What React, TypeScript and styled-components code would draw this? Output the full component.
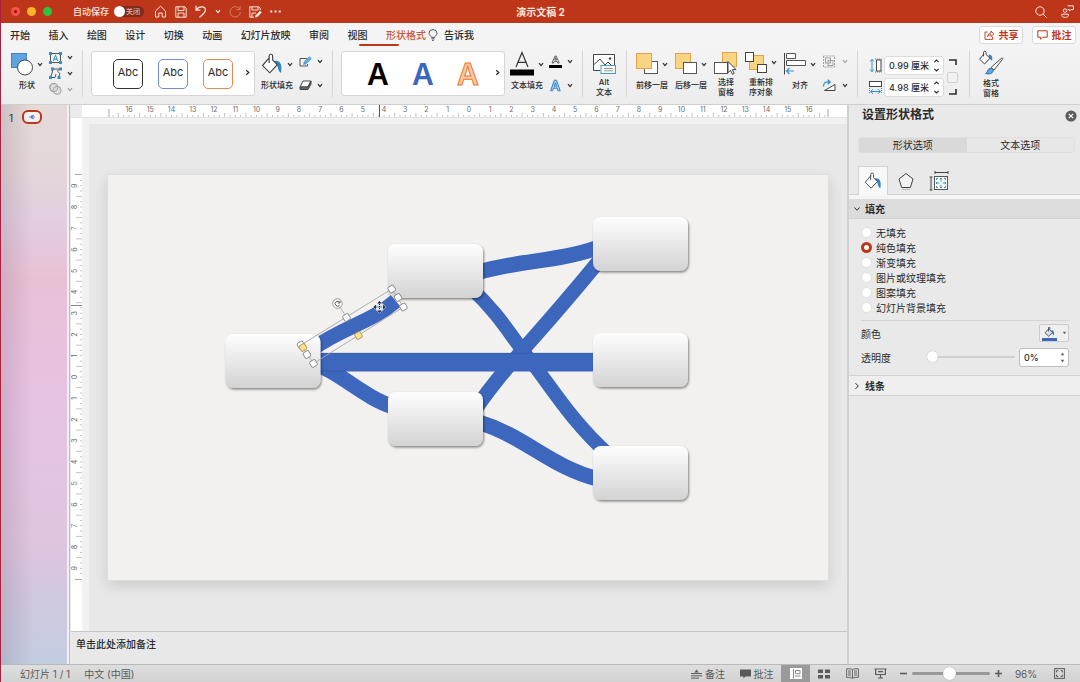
import React, { useState } from "react";
import styled, { createGlobalStyle, css } from "styled-components";

const RED = "#bd3619";
const INK = "#2b2b2b";
const BLUE = "#3c67bd";
const FONT = `Inter, "Noto Sans CJK SC", sans-serif`;

const GlobalStyle = createGlobalStyle`
  *, *::before, *::after { box-sizing: border-box; }
  body { margin: 0; font-family: ${FONT}; font-size: 10px; color: ${INK}; background: #e8e8e8; }
  button, input { font: inherit; color: inherit; margin: 0; padding: 0; border: 0; background: none; }
  svg { display: block; flex: none; }
`;

/* ---------- shell ---------- */

const Window = styled.div`
  min-height: 100vh;
  display: flex;
  flex-direction: column;
  border-left: 1px solid #a8203c;
  overflow: hidden;
`;

const TitleBar = styled.header`
  display: grid;
  grid-template-columns: 1fr auto 1fr;
  align-items: center;
  height: 23px;
  background: ${RED};
  color: #fbe6df;
`;

const TitleGroup = styled.div<{ $end?: boolean }>`
  display: flex;
  align-items: center;
  gap: ${(p) => (p.$end ? 14 : 8)}px;
  padding: 0 6px 0 10px;
  justify-content: ${(p) => (p.$end ? "flex-end" : "flex-start")};
`;

const Lights = styled.div`
  display: flex;
  gap: 7px;
  margin-right: 13px;
`;

const Light = styled.button<{ $color: string; $dot?: boolean }>`
  width: 9px;
  height: 9px;
  border-radius: 50%;
  background: ${(p) => p.$color};
  display: grid;
  place-items: center;
  &::after {
    content: "";
    width: 3px;
    height: 3px;
    border-radius: 50%;
    background: ${(p) => (p.$dot ? "#7a0d05" : "transparent")};
  }
`;

const AutoSave = styled.label`
  display: flex;
  align-items: center;
  gap: 5px;
  margin-right: 2px;
  font-size: 9px;
  font-weight: 500;
  white-space: nowrap;
`;

const Switch = styled.span`
  position: relative;
  width: 30px;
  height: 11px;
  border-radius: 6px;
  background: #7d2b1b;
  display: flex;
  align-items: center;
  justify-content: flex-end;
  padding-right: 4px;
  color: #e3b9ae;
  font-size: 7px;
  line-height: 11px;
  input {
    appearance: none;
    position: absolute;
    left: 0;
    top: 0;
    width: 11px;
    height: 11px;
    border-radius: 50%;
    background: #fff;
  }
`;

const DocTitle = styled.h1`
  margin: 0;
  font-size: 10px;
  font-weight: 700;
`;

const IconButton = styled.button<{ $dim?: boolean }>`
  display: flex;
  align-items: center;
  justify-content: center;
  opacity: ${(p) => (p.$dim ? 0.4 : 1)};
`;

/* ---------- ribbon ---------- */

const TabRow = styled.nav`
  display: flex;
  align-items: center;
  height: 25px;
  padding: 0 4px 2px 9px;
  background: #f4f4f4;
`;

const Tabs = styled.div`
  display: flex;
  justify-content: space-between;
  width: 416px;
`;

const Tab = styled.button<{ $active?: boolean }>`
  position: relative;
  font-weight: 500;
  line-height: 16px;
  white-space: nowrap;
  color: ${(p) => (p.$active ? "#c8553f" : INK)};
  ${(p) =>
    p.$active &&
    css`
      &::after {
        content: "";
        position: absolute;
        right: 27px;
        bottom: -3px;
        width: 40px;
        height: 2px;
        border-radius: 1px;
        background: ${RED};
      }
    `}
`;

const TellMe = styled.button`
  display: flex;
  align-items: center;
  gap: 6px;
  margin-left: 2px;
  font-weight: 500;
`;

const TabActions = styled.div`
  display: flex;
  gap: 9px;
  margin-left: auto;
`;

const ActionButton = styled.button`
  display: flex;
  align-items: center;
  justify-content: center;
  gap: 4px;
  width: 44px;
  height: 18px;
  border: 1px solid #dadada;
  border-radius: 3px;
  background: #fff;
  color: ${RED};
  font-weight: 600;
`;

const Ribbon = styled.section`
  display: flex;
  height: 57px;
  padding: 2px 2px 7px;
  background: linear-gradient(#f4f4f4, #ececec);
  border-bottom: 1px solid #cfcfcf;
`;

const Group = styled.div<{ $gap?: number; $wide?: boolean; $last?: boolean }>`
  display: flex;
  flex: none;
  gap: ${(p) => p.$gap ?? 6}px;
  padding: ${(p) => (p.$wide ? "0 11px" : "0 9px 0 8px")};
  border-right: ${(p) => (p.$last ? "0" : "1px solid #d5d5d5")};
`;

const BigButtonBox = styled.button<{ $width: number }>`
  display: flex;
  flex-direction: column;
  align-items: center;
  width: ${(p) => p.$width}px;
  font-size: 8px;
  font-weight: 500;
  line-height: 10px;
  white-space: pre;
`;

const BigIcon = styled.span`
  display: flex;
  align-items: center;
  justify-content: center;
  gap: 4px;
  width: 100%;
  height: 28px;
  margin-bottom: 2px;
`;

const SmallColumn = styled.div<{ $width?: number }>`
  display: flex;
  flex-direction: column;
  justify-content: space-around;
  width: ${(p) => p.$width ?? 24}px;
`;

const SmallButton = styled.button<{ $dim?: boolean }>`
  display: flex;
  align-items: center;
  justify-content: space-between;
  height: 15px;
  opacity: ${(p) => (p.$dim ? 0.4 : 1)};
`;

const Gallery = styled.div`
  display: flex;
  align-items: center;
  justify-content: center;
  position: relative;
  gap: 15px;
  width: 164px;
  height: 45px;
  margin-top: 1px;
  background: #fff;
  border: 1px solid #d6d6d6;
  border-radius: 3px;
`;

const GalleryMore = styled.button`
  position: absolute;
  right: 4px;
  top: 17px;
`;

const StyleSwatch = styled.button<{ $color: string }>`
  width: 30px;
  height: 30px;
  border: 1px solid ${(p) => p.$color};
  border-radius: 5px;
  font-size: 11px;
  line-height: 24px;
  padding-bottom: 4px;
`;

const TextSwatch = styled.button<{ $color: string; $outline?: string }>`
  width: 30px;
  font-size: 30px;
  line-height: 44px;
  font-weight: 600;
  color: ${(p) => p.$color};
  -webkit-text-stroke: ${(p) => (p.$outline ? `1px ${p.$outline}` : "0")};
`;

const SizeFields = styled.div`
  display: flex;
  flex-direction: column;
  gap: 3px;
  padding-top: 6px;
`;

const SizeField = styled.label`
  display: flex;
  align-items: center;
  gap: 2px;
`;

const NumberBox = styled.span<{ $width: number; $boxed?: boolean }>`
  display: flex;
  align-items: center;
  width: ${(p) => p.$width}px;
  height: 19px;
  margin-left: ${(p) => (p.$boxed ? 4 : 0)}px;
  padding: 0 3px 0 4px;
  background: #fff;
  border: 1px solid ${(p) => (p.$boxed ? "#bdbdbd" : "#dcdcdc")};
  border-radius: 3px;
  input {
    flex: 1;
    min-width: 0;
    font-size: 9px;
    font-weight: 500;
    outline: none;
  }
`;

const LockRatio = styled.div`
  display: flex;
  flex-direction: column;
  align-items: center;
  justify-content: space-between;
  height: 36px;
  margin: 9px 0 0 -2px;
  input {
    appearance: none;
    width: 11px;
    height: 11px;
    border: 1px solid #cfcfcf;
    border-radius: 2px;
    background: #f1f1f1;
  }
`;

/* ---------- workspace ---------- */

const Workspace = styled.div`
  display: flex;
  flex: 1;
  min-height: 0;
`;

const Thumbnails = styled.aside`
  display: flex;
  align-items: flex-start;
  gap: 9px;
  width: 69px;
  flex: none;
  padding: 5px 0 0 8px;
  border-right: 1px solid #bdbdbd;
  box-shadow: inset -2px 0 #f3f0f3;
  background: linear-gradient(90deg, rgba(90, 60, 80, 0.16), rgba(90, 60, 80, 0) 32px),
    linear-gradient(
      #e5dbd9 0%,
      #e3d6da 12%,
      #e2cfe0 20%,
      #e9c1d5 31%,
      #e8c1dd 42%,
      #e5c4e2 55%,
      #dfc5de 78%,
      #d0c8de 88%,
      #c3cde2 100%
    );
  line-height: 16px;
`;

const Thumb = styled.button`
  display: grid;
  place-items: center;
  width: 20px;
  height: 14px;
  border: 2px solid ${RED};
  border-radius: 6px;
  background: #f2f1ef;
`;

const Editor = styled.main`
  display: flex;
  flex-direction: column;
  flex: 1;
  min-width: 0;
  padding-left: 1px;
  background: #e8e8e8;
`;

const RulerRow = styled.div`
  display: flex;
  height: 13px;
  background: #fff;
  border-bottom: 1px solid #e2e2e2;
  overflow: hidden;
`;

const RulerCorner = styled.div`
  width: 11px;
  flex: none;
  background: #ebebeb;
`;

const RulerTrack = styled.div`
  flex: 1;
  min-width: 0;
  display: flex;
  justify-content: center;
`;

const StageRow = styled.div`
  display: flex;
  flex: 1;
`;

const VRulerTrack = styled.div`
  width: 11px;
  flex: none;
  background: #fff;
  overflow: hidden;
`;

const Stage = styled.div`
  flex: 1;
  min-width: 0;
  padding: 51px 19px;
  border: solid #f1f1f1;
  border-width: 6px 0 0 7px;
`;

const Slide = styled.div`
  aspect-ratio: 16 / 9;
  background: #f2f1ef;
  box-shadow: 0 0 0 1px #dededd, 0 5px 14px rgba(0, 0, 0, 0.14);
  svg {
    width: 100%;
    height: 100%;
  }
`;

const Notes = styled.div`
  height: 33px;
  padding: 3px 5px;
  border-top: 1px solid #c6c6c6;
  font-weight: 500;
  line-height: 18px;
`;

/* ---------- format pane ---------- */

const Pane = styled.aside`
  width: 233px;
  flex: none;
  display: flex;
  flex-direction: column;
  border-left: 2px solid #d0d0d0;
  background: #e9e9e9;
`;

const PaneHeader = styled.div`
  display: flex;
  align-items: center;
  justify-content: space-between;
  height: 22px;
  padding: 0 3px 0 13px;
  h2 {
    margin: 0;
    font-size: 12px;
    line-height: 18px;
    padding-bottom: 2px;
    font-weight: 600;
  }
`;

const Segments = styled.div`
  display: flex;
  height: 16px;
  margin: 10px 5px 0 9px;
  border: 1px solid #e0e0e0;
  border-radius: 3px;
  overflow: hidden;
`;

const Segment = styled.button<{ $active?: boolean }>`
  flex: 1;
  line-height: 14px;
  background: ${(p) => (p.$active ? "#d9d9d9" : "#e7e7e7")};
`;

const KindTabs = styled.div`
  display: flex;
  gap: 3px;
  height: 29px;
  margin-top: 13px;
  padding-left: 9px;
  border-bottom: 1px solid #d2d2d2;
`;

const KindTab = styled.button<{ $active?: boolean }>`
  display: grid;
  place-items: center;
  width: 30px;
  height: 29px;
  border: 1px solid transparent;
  border-bottom: 0;
  ${(p) => p.$active && "background: #f8f8f8; border-color: #d2d2d2;"}
`;

const Section = styled.section<{ $open?: boolean }>`
  border-top: ${(p) => (p.$open ? "4px solid #f5f5f5" : "1px solid #d2d2d2")};
`;

const SectionHeader = styled.button<{ $open?: boolean }>`
  display: flex;
  align-items: center;
  gap: 4px;
  width: 100%;
  height: 20px;
  padding-left: 4px;
  border-bottom: 1px solid #d2d2d2;
  background: ${(p) => (p.$open ? "#dcdcdc" : "#efefef")};
  font-weight: 600;
`;

const RadioList = styled.fieldset`
  margin: 0 11px 0 12px;
  padding: 6px 0 5px;
  border: 0;
  border-bottom: 1px solid #d4d4d4;
`;

const RadioRow = styled.label`
  display: flex;
  align-items: center;
  gap: 4px;
  height: 15px;
  input {
    appearance: none;
    width: 11px;
    height: 11px;
    border-radius: 50%;
    background: #fff;
    box-shadow: inset 0 0 0 1px #dedede;
  }
  input:checked {
    background: radial-gradient(circle, #fff 0 2px, ${RED} 3px);
    box-shadow: none;
  }
`;

const FieldRow = styled.div<{ $last?: boolean }>`
  display: flex;
  align-items: center;
  height: ${(p) => (p.$last ? 30 : 24)}px;
  padding: ${(p) => (p.$last ? "0 11px 6px 12px" : "0 11px 0 12px")};
  label,
  span:first-child {
    margin-right: auto;
  }
`;

const ColorButton = styled.button`
  display: flex;
  align-items: center;
  justify-content: center;
  gap: 5px;
  width: 30px;
  height: 18px;
  border: 1px solid #cacaca;
  border-radius: 2px;
  background: #efefef;
`;

const Range = styled.input<{ $width: number; $dark?: boolean }>`
  appearance: none;
  width: ${(p) => p.$width}px;
  height: 12px;
  &::-webkit-slider-runnable-track {
    height: ${(p) => (p.$dark ? 3 : 2)}px;
    border-radius: 2px;
    background: ${(p) => (p.$dark ? "#989898" : "#d0d0d0")};
  }
  &::-webkit-slider-thumb {
    appearance: none;
    width: ${(p) => (p.$dark ? 13 : 11)}px;
    height: ${(p) => (p.$dark ? 13 : 11)}px;
    margin-top: -5px;
    border-radius: 50%;
    background: #fff;
    box-shadow: 0 0 1px rgba(0, 0, 0, 0.35);
  }
`;

/* ---------- status bar ---------- */

const StatusBar = styled.footer`
  display: flex;
  align-items: center;
  height: 18px;
  padding: 0 8px 0 19px;
  border-top: 1px solid #b9b9b9;
  background: linear-gradient(#dedede, #d2d2d2);
  color: #5a5a5a;
  white-space: nowrap;
`;

const StatusText = styled.span`
  margin-right: 14px;
`;

const StatusRight = styled.div`
  display: flex;
  align-items: center;
  height: 100%;
  margin-left: auto;
`;

const StatusButton = styled.button<{ $width: number; $active?: boolean }>`
  display: flex;
  align-items: center;
  justify-content: center;
  gap: 3px;
  width: ${(p) => p.$width}px;
  height: 100%;
  background: ${(p) => (p.$active ? "#9a9a9a" : "none")};
`;

/* ---------- icons ---------- */

type IconProps = { w: number; h: number; box?: string; sw?: number; children: React.ReactNode };

const Icon = ({ w, h, box, sw = 1, children }: IconProps) => (
  <svg width={w} height={h} viewBox={box ?? `0 0 ${w} ${h}`} fill="none" stroke="currentColor" strokeWidth={sw} aria-hidden="true">
    {children}
  </svg>
);

const Chevron = () => (
  <Icon w={6} h={5} sw={1.2}>
    <path d="M1 1.2 3 3.6 5 1.2" />
  </Icon>
);

const ChevronRight = () => (
  <Icon w={5} h={7} sw={1.2}>
    <path d="M1.2 1.2 3.8 3.5 1.2 5.8" />
  </Icon>
);

const Stepper = () => (
  <Icon w={7} h={15} sw={1.2}>
    <path d="M1.3 4.2 3.5 2 5.7 4.2M1.3 10.8 3.5 13 5.7 10.8" />
  </Icon>
);

const Bucket = ({ size = 20 }: { size?: number }) => (
  <Icon w={size} h={size} box="0 0 20 20">
    <path d="M12.6 7C18 6.6 19.4 11 18.2 18 15.4 17 15.6 12.4 14.2 10.2L11 7.4Z" fill="#2f83c5" stroke="none" />
    <path d="M7.6 4.2 1.4 11.4 8 18 14.8 10.6 10.6 6.4V2.8a1.6 1.6 0 0 0-3.2 0v6.4" fill="#fff" stroke="#3c3c3c" />
  </Icon>
);

const ShapesIcon = () => (
  <Icon w={22} h={24}>
    <rect x="0.5" y="1.5" width="15" height="14" fill="#5ea3df" stroke="#3c86c8" />
    <circle cx="14" cy="15.5" r="7.5" fill="#fff" stroke="#444" />
  </Icon>
);

const TextBoxIcon = () => (
  <Icon w={13} h={12}>
    <rect x="1.5" y="1.5" width="10" height="9" stroke="#555" />
    <path d="M0 0h3v3H0zM10 0h3v3h-3zM0 9h3v3H0zM10 9h3v3h-3z" fill="#2f8fd0" stroke="none" />
    <path d="M4.3 9 6.5 3.2 8.7 9M5 7.2h3" stroke="#2f8fd0" />
  </Icon>
);

const EditPointsIcon = () => (
  <Icon w={13} h={12}>
    <path d="M3.5 2h8C7 3.5 8.5 5 11 6.5L9.5 10M3.5 2C4 5 2.5 7 1.5 10.5h4.5L7 7" stroke="#555" />
    <path d="M2 0.5h3v3H2zM10 0.5h3v3h-3zM0 9h3v3H0zM8.5 9h3v3h-3z" fill="#2f8fd0" stroke="none" />
  </Icon>
);

const MergeIcon = () => (
  <Icon w={13} h={12}>
    <circle cx="4.8" cy="4.6" r="4" fill="#ccc" />
    <circle cx="8.2" cy="7.4" r="4" fill="#ccc" />
    <circle cx="4.8" cy="4.6" r="4" />
  </Icon>
);

const OutlineIcon = () => (
  <Icon w={13} h={12}>
    <path d="M8 2.5H1v7.5h7.5V8" stroke="#555" />
    <path d="M4.6 8.4 5.4 5.8 10.4 0.9 12.2 2.6 7.2 7.6Z" fill="#5fb2e6" stroke="#2f83c5" strokeWidth="0.8" />
  </Icon>
);

const EffectsIcon = () => (
  <Icon w={13} h={12}>
    <path d="M4 2h8L9 8H1Z" fill="#fff" stroke="#444" />
    <path d="M1 8v2.5h8L12 5V2L9 8Z" fill="#666" stroke="#444" />
  </Icon>
);

const TextFillIcon = () => (
  <Icon w={24} h={26}>
    <path d="M6 16 12 1.5 18 16M8 11.3h8" stroke="#333" strokeWidth="1.2" />
    <rect x="0" y="18.5" width="24" height="6" fill="#000" stroke="none" />
  </Icon>
);

const TextOutlineIcon = () => (
  <Icon w={13} h={13}>
    <path d="M3 8 6 1h1.2l3 7H8.6L8 6.4H5.2L4.6 8ZM5.7 5h1.9L6.6 2.6Z" stroke="#444" strokeWidth="0.8" />
    <rect x="0" y="10" width="13" height="3" fill="#000" stroke="none" />
  </Icon>
);

const TextEffectIcon = () => (
  <Icon w={13} h={13}>
    <path d="M1.6 11.8 5.3 1.2h2.2l3.7 10.6H9L8.2 9.2H4.5L3.7 11.8ZM5.2 7.2h2.3L6.4 3.8Z" fill="#a9d3f2" stroke="#2f83c5" />
  </Icon>
);

const AltTextIcon = () => (
  <Icon w={24} h={24}>
    <path d="M8 19.5H1.5v-16h21v11" fill="#fff" stroke="#444" />
    <path d="M1.5 14 8 8l5 6 3-3 4 4" stroke="#444" />
    <circle cx="18" cy="7.5" r="1.2" fill="#444" stroke="none" />
    <rect x="9" y="14.5" width="14.5" height="8" fill="#fff" stroke="#3c9bd0" />
    <path d="M12 17.5h9M12 19.8h9" stroke="#777" strokeWidth="0.8" />
  </Icon>
);

const ForwardIcon = () => (
  <Icon w={22} h={24}>
    <rect x="8.5" y="9.5" width="13" height="12" fill="#fff" stroke="#555" />
    <rect x="0.5" y="1.5" width="15" height="15" fill="#f8d583" stroke="#e5a150" />
  </Icon>
);

const BackwardIcon = () => (
  <Icon w={22} h={24}>
    <rect x="0.5" y="1.5" width="15" height="15" fill="#f8d583" stroke="#e5a150" />
    <rect x="8.5" y="10.5" width="13" height="11" fill="#fff" stroke="#555" />
  </Icon>
);

const SelectionPaneIcon = () => (
  <Icon w={24} h={24}>
    <rect x="8.5" y="1.5" width="14" height="14" fill="#f8d583" stroke="#e5a150" />
    <rect x="0.5" y="11.5" width="13" height="11" fill="#fff" stroke="#555" />
    <path d="M14 10.5v11.2l2.6-2.4 1.8 4 1.8-.9-1.8-3.8h3.6Z" fill="#fff" stroke="#333" strokeWidth="0.9" />
  </Icon>
);

const ReorderIcon = () => (
  <Icon w={22} h={24}>
    <rect x="4.5" y="4.5" width="14" height="14" fill="#f8d583" stroke="#e5a150" />
    <rect x="0.5" y="1.5" width="8" height="9" fill="#fff" stroke="#444" />
    <rect x="12.5" y="13.5" width="9" height="8" fill="#fff" stroke="#444" />
  </Icon>
);

const AlignIcon = () => (
  <Icon w={22} h={24}>
    <path d="M0.5 1v21.5" stroke="#444" />
    <path d="M2.5 1.5h9v5h-9zM2.5 8.5h19v5h-19z" fill="#fff" stroke="#555" />
    <path d="M10 19H2.5M5.5 16 2.5 19l3 3" stroke="#2f8fd0" strokeWidth="1.2" />
  </Icon>
);

const GroupIcon = () => (
  <Icon w={14} h={13}>
    <rect x="3.5" y="3" width="5" height="5" />
    <rect x="6" y="5.5" width="5" height="5" />
    <rect x="1.5" y="1" width="11" height="11" strokeDasharray="2 1" />
  </Icon>
);

const RotateIcon = () => (
  <Icon w={14} h={13}>
    <path d="M1.5 7.5C1.5 3.5 4 2.5 8 3M5.8 0.8 8.2 3 5.8 5.2" stroke="#2f8fd0" strokeWidth="1.2" />
    <path d="M2.5 11.5H13V5.5Z" fill="#fff" stroke="#444" />
  </Icon>
);

const HeightIcon = () => (
  <Icon w={13} h={15}>
    <path d="M3 1.5v12M1 3.5l2-2.2 2 2.2M1 11.5l2 2.2 2-2.2" stroke="#2f8fd0" />
    <path d="M6 1h7M6 14h7" stroke="#777" strokeDasharray="1 1" />
    <rect x="7.5" y="2" width="4.5" height="11" fill="#fff" stroke="#444" />
  </Icon>
);

const WidthIcon = () => (
  <Icon w={13} h={15}>
    <rect x="0.5" y="1.5" width="12" height="5" fill="#fff" stroke="#444" />
    <path d="M.5 8v6M12.5 8v6" stroke="#777" strokeDasharray="1 1" />
    <path d="M1.5 11.5h10M4 9.2 1.7 11.5 4 13.8M9 9.2l2.3 2.3L9 13.8" stroke="#2f8fd0" />
  </Icon>
);

const FormatPaneIcon = () => (
  <Icon w={26} h={26}>
    <path d="M10.6 4.4C14 4.6 14.8 7 14 11L11.4 8Z" fill="#2f83c5" stroke="none" />
    <path d="M6 4 1.6 9.2 6.6 14 12 8.2 8 4.4V2.4a1.2 1.2 0 0 0-2.4 0v4" fill="#fff" stroke="#3c3c3c" />
    <path d="M13 17.5 23.6 8.2c1-.6 1.6.2 1 1L16 20Z" fill="#fff" stroke="#444" />
    <path d="M7.5 23.5c2.4-.2 1.4-4.6 4.6-5.2 2 0 3.4 1.4 3 3-.6 2.2-4.2 3.4-7.6 2.2Z" fill="#5aa9e0" stroke="#2f6fb0" />
  </Icon>
);

const HomeIcon = () => (
  <Icon w={13} h={13}>
    <path d="M1.5 6 6.5 1.2 11.5 6v6H8.2V8H4.8v4H1.5Z" />
  </Icon>
);

const SaveIcon = () => (
  <Icon w={12} h={12}>
    <path d="M.8.8h9l1.4 1.4v9H.8ZM3 .8v3.7h6V.8M3 11.2V7h6v4.2" />
  </Icon>
);

const SaveEditIcon = () => (
  <Icon w={13} h={12}>
    <path d="M5 11.2H.8V.8h9l1.4 1.4v2M3 .8v3.2h6V.8M3 11.2V7h4" />
    <path d="M6 11.6 6.6 9.2 11 4.8l1.8 1.8-4.4 4.4Z" fill="currentColor" stroke="none" />
  </Icon>
);

const UndoIcon = () => (
  <Icon w={12} h={13} sw={1.2}>
    <path d="M1 .8v4.4h4.4M1.2 5C4 .6 10.6 1.2 10.4 5.2 10.2 8 8 9 4.4 12.4" />
  </Icon>
);

const RedoIcon = () => (
  <Icon w={12} h={13}>
    <path d="M11 1v3.6H7.4M10.8 4.4A5.2 5.2 0 1 0 11.4 7" />
  </Icon>
);

const DotsIcon = () => (
  <Icon w={11} h={3}>
    <path d="M.3.5h2v2h-2zM4.5.5h2v2h-2zM8.7.5h2v2h-2z" fill="currentColor" stroke="none" />
  </Icon>
);

const SearchIcon = () => (
  <Icon w={12} h={12}>
    <circle cx="5" cy="5" r="4.2" />
    <path d="M8 8l3.6 3.6" />
  </Icon>
);

const PeopleIcon = () => (
  <Icon w={13} h={13}>
    <circle cx="4" cy="5.6" r="1.8" />
    <path d="M.8 9.2h6.6v1.4c0 2.4-6.6 2.4-6.6 0ZM6.6.8h5.8v3.8H10L8.4 6V4.6H6.6" />
  </Icon>
);

const BulbIcon = () => (
  <Icon w={10} h={12}>
    <path d="M3.4 8.4C3.4 7 1 6.4 1 4.2a4 3.6 0 0 1 8 0C9 6.4 6.6 7 6.6 8.4ZM3.4 9.8h3.2M4 11.3h2" stroke="#555" />
  </Icon>
);

const ShareIcon = () => (
  <Icon w={11} h={10}>
    <path d="M3.6 2H1v7.4h7.6V6.6M3.6 6.6C3.8 4 5.4 3 7 3V1l3 2.8-3 2.8V4.8C5.4 4.8 4.4 5.4 3.6 6.6Z" strokeWidth="0.9" />
  </Icon>
);

const CommentIcon = () => (
  <Icon w={11} h={10}>
    <path d="M.8.8h9.4v6.4H5.6L3.4 9.2V7.2H.8Z" />
  </Icon>
);

const CloseIcon = () => (
  <Icon w={12} h={12}>
    <circle cx="6" cy="6" r="5.6" fill="#5c5c5c" stroke="none" />
    <path d="M3.8 3.8l4.4 4.4M8.2 3.8 3.8 8.2" stroke="#fff" strokeWidth="1.2" />
  </Icon>
);

const PentagonIcon = () => (
  <Icon w={16} h={18}>
    <path d="M8 1.5 15 7l-2.6 8.5H3.6L1 7Z" fill="#f2f2f2" stroke="#444" />
    <path d="M4 17.3h8" stroke="#bbb" />
  </Icon>
);

const LayoutIcon = () => (
  <Icon w={20} h={20}>
    <path d="M6 1.5h13M6 0v3M19 0v3M2 6v13M.5 6h3M.5 19h3" stroke="#444" />
    <rect x="5.5" y="5.5" width="13" height="13" fill="#fff" stroke="#555" />
    <path d="M12 7v3.4M12 13.800V17M7 12h3.4M13.6 12H17M10.8 8.2 12 7l1.2 1.2M10.8 15.8 12 17l1.2-1.2M8.2 10.8 7 12l1.2 1.2M15.8 10.8 17 12l-1.2 1.2" stroke="#2f8fd0" />
    <path d="M7.500 9V7.500H9M15 7.500h1.500V9M7.500 15v1.500H9M16.500 15v1.500H15" stroke="#2f8fd0" />
  </Icon>
);

const Caret = () => (
  <Icon w={5} h={4}>
    <path d="M.7.8h3.6L2.5 3.200Z" fill="#666" stroke="none" />
  </Icon>
);

const NotesIcon = () => (
  <Icon w={11} h={10}>
    <path d="M3.4 3.4 5.5.6l2.1 2.8Z" fill="currentColor" stroke="none" />
    <path d="M0 4.5h11M0 6.800h11M0 9.100h8" />
  </Icon>
);

const CommentSolidIcon = () => (
  <Icon w={11} h={10}>
    <path d="M0 .6h11v6.8H5.4L3.4 9.6V7.4H0Z" fill="currentColor" stroke="none" />
  </Icon>
);

const NormalViewIcon = () => (
  <Icon w={12} h={11}>
    <rect x=".5" y=".5" width="11" height="10" fill="#fff" stroke="#fff" />
    <path d="M3.5 1v9.5M5.5 2.5H10v3.2H5.5ZM5.2 8H10.4" stroke="#8a8a8a" />
  </Icon>
);

const SorterIcon = () => (
  <Icon w={12} h={10}>
    <path d="M0 .5h5v3.5H0zM7 .5h5v3.5H7zM0 6h5v3.5H0zM7 6h5v3.5H7z" fill="currentColor" stroke="none" />
  </Icon>
);

const ReadingIcon = () => (
  <Icon w={13} h={11} sw={0.9}>
    <path d="M6.5 1.6C5 .6 2.6.6.6.8v8.6c2 0 4.4-.2 5.9.9 1.5-1.1 3.9-.9 5.9-.9V.8c-2-.2-4.4-.2-5.9.8ZM6.5 1.6v8.7M2 3h3M2 5h3M2 7h3M8 3h3M8 5h3M8 7h3" />
  </Icon>
);

const ShowIcon = () => (
  <Icon w={13} h={11} sw={1.2}>
    <path d="M.5 1h12M1.6 1v5.5h9.8V1M6.5 6.5v3M4 10h5M4 3.6h5" />
  </Icon>
);

const FitIcon = () => (
  <Icon w={11} h={11}>
    <rect x=".6" y=".6" width="9.8" height="9.8" />
    <path d="M2.6 4.4V2.6h1.8M6.6 2.6h1.8v1.8M2.6 6.6v1.8h1.8M8.4 6.6v1.8H6.6" />
  </Icon>
);

/* ---------- rulers ---------- */

const STEP = 21.25;

const range = (from: number, to: number) => Array.from({ length: to - from + 1 }, (_, i) => from + i);

const HorizontalRuler = () => (
  <svg width="764" height="13" viewBox="-386 0 764 13" fontSize="7" textAnchor="middle" fill="#6b6b6b" aria-hidden="true">
    {range(-67, 67).map((q) => {
      const half = Math.abs(q) % 4 === 2;
      return <path key={q} d={`M${(q * STEP) / 4} ${half ? 8 : 10}V12`} stroke="#a9a9a9" strokeWidth="0.7" />;
    })}
    {range(-16, 16).map((n) => (
      <text key={n} x={n * STEP} y="6.5">
        {Math.abs(n)}
      </text>
    ))}
    <path d="M-360 4v9M359 4v9" stroke="#aaa" />
    <path d="M-89.5 0v13" stroke="#555" />
  </svg>
);

const VerticalRuler = () => (
  <svg width="11" height="490" viewBox="0 -259 11 490" fontSize="7" textAnchor="middle" fill="#6b6b6b" aria-hidden="true">
    {range(-37, 37).map((q) => {
      const half = Math.abs(q) % 4 === 2;
      return <path key={q} d={`M${half ? 5 : 9} ${(q * STEP) / 4}H11`} stroke="#a9a9a9" strokeWidth="0.7" />;
    })}
    {range(-9, 9).map((n) => (
      <text key={n} transform={`translate(6 ${n * STEP}) rotate(-90)`}>
        {Math.abs(n)}
      </text>
    ))}
    <path d="M4 -202.5h7M4 202.5h7" stroke="#aaa" />
    <path d="M0 -71.5h11" stroke="#888" />
  </svg>
);

/* ---------- slide drawing ---------- */

const Node = ({ x, y }: { x: number; y: number }) => (
  <rect x={x} y={y} width="95" height="54" rx="8" fill="url(#node)" filter="url(#nodeShadow)" />
);

const Handle = ({ x, y, gold }: { x: number; y: number; gold?: boolean }) => (
  <rect
    x="-3.2"
    y="-3.2"
    width="6.4"
    height="6.4"
    rx="1.5"
    transform={`translate(${x} ${y}) rotate(-31)`}
    fill={gold ? "#fbe08f" : "#fff"}
    stroke={gold ? "#b3995a" : "#8c8c8c"}
    strokeWidth="0.9"
  />
);

const SlideDrawing = () => (
  <svg viewBox="108 175 720 405" role="img" aria-label="幻灯片">
    <defs>
      <linearGradient id="node" x1="0" y1="0" x2="0" y2="1">
        <stop offset="0" stopColor="#fefefe" />
        <stop offset="1" stopColor="#d3d3d3" />
      </linearGradient>
      <filter id="nodeShadow" x="-10%" y="-15%" width="125%" height="140%">
        <feDropShadow dx="1" dy="1.5" stdDeviation="1.3" floodColor="#000" floodOpacity="0.45" />
      </filter>
    </defs>
    <g fill="none" stroke={BLUE} strokeWidth="15.5">
      <path d="M478 272.5 C518 260 558 262 598 247.500" />
      <path d="M470 287 C500 315 510 335 530 360 S570 420 610 456" strokeWidth="14" />
      <path d="M470 418 C485 393 505 370 528 344 S580 285 606 252" strokeWidth="14.5" />
      <path d="M478 422 C525 436 550 467 598 479" />
      <path d="M310 362 C340 371 362 397 394 407" />
      <path d="M316 362.2H597" strokeWidth="18.5" />
    </g>
    <path d="M320 371h25" stroke="#31539c" strokeWidth="0.8" />
    <path d="M320 353.3H593" stroke="#3157a6" strokeWidth="0.6" />
    <Node x={388} y={244} />
    <Node x={388} y={392} />
    <Node x={593} y={217} />
    <Node x={593} y={333} />
    <Node x={593} y={446} />
    <path d="M312 349 C345 326 370 323 395.7 301" fill="none" stroke={BLUE} strokeWidth="15" />
    <Node x={225.5} y={334} />
    <g fill="none" stroke="#a6a6a6" strokeWidth="0.9">
      <path d="M301 345 391.7 289 403.5 307 313.5 363.500Z" />
      <path d="M338 304 346.5 317.5" />
    </g>
    <Handle x={301} y={345} />
    <Handle x={391.7} y={289} />
    <Handle x={398} y={297.5} />
    <Handle x={403.5} y={307} />
    <Handle x={346.5} y={317.5} />
    <Handle x={307} y={354.5} />
    <Handle x={313.5} y={363.5} />
    <Handle x={303} y={347.5} gold />
    <Handle x={358.5} y={335.5} gold />
    <circle cx="337.5" cy="303.5" r="4.8" fill="#fff" stroke="#8c8c8c" strokeWidth="0.9" />
    <path d="M339.7 302.6A2.4 2.4 0 1 0 339.6 305M340 300.9V303H337.9" fill="none" stroke="#444" strokeWidth="0.9" />
    <g transform="translate(379.5 307)">
      <path d="M0-6.500 6.500 0 0 6.500-6.500 0Z" fill="#dfe6f3" />
      <path
        d="M0-6 2.200-3.600H-2.200ZM0 6 2.200 3.600H-2.200ZM-6 0-3.600-2.200V2.200ZM6 0 3.600-2.200V2.200Z"
        fill="#1d1d1d"
      />
      <path d="M0-3V3M-3 0H3" stroke="#1d1d1d" strokeWidth="1" strokeDasharray="1 1" />
    </g>
  </svg>
);

/* ---------- parts ---------- */

type BigButtonProps = { icon: React.ReactNode; label: string; width?: number; menu?: boolean };

const BigButton = ({ icon, label, width = 34, menu }: BigButtonProps) => (
  <BigButtonBox $width={width}>
    <BigIcon>
      {icon}
      {menu && <Chevron />}
    </BigIcon>
    {label}
  </BigButtonBox>
);

const MenuIcon = ({ icon, name, dim }: { icon: React.ReactNode; name: string; dim?: boolean }) => (
  <SmallButton aria-label={name} $dim={dim}>
    {icon}
    <Chevron />
  </SmallButton>
);

const TABS = ["开始", "插入", "绘图", "设计", "切换", "动画", "幻灯片放映", "审阅", "视图", "形状格式"];
const FILLS = ["无填充", "纯色填充", "渐变填充", "图片或纹理填充", "图案填充", "幻灯片背景填充"];

export default function App() {
  const [tab, setTab] = useState("形状格式");
  const [fill, setFill] = useState("纯色填充");

  return (
    <Window>
      <GlobalStyle />
      <TitleBar>
        <TitleGroup>
          <Lights>
            <Light $color="#f9524b" $dot aria-label="关闭窗口" />
            <Light $color="#fbb42c" aria-label="最小化" />
            <Light $color="#2bc440" aria-label="缩放" />
          </Lights>
          <AutoSave>
            自动保存
            <Switch>
              <input type="checkbox" />
              关闭
            </Switch>
          </AutoSave>
          <IconButton aria-label="主页"><HomeIcon /></IconButton>
          <IconButton aria-label="保存"><SaveIcon /></IconButton>
          <IconButton aria-label="撤销"><UndoIcon /></IconButton>
          <IconButton aria-label="撤销列表"><Chevron /></IconButton>
          <IconButton aria-label="重做" $dim><RedoIcon /></IconButton>
          <IconButton aria-label="另存为"><SaveEditIcon /></IconButton>
          <IconButton aria-label="更多"><DotsIcon /></IconButton>
        </TitleGroup>
        <DocTitle>演示文稿 2</DocTitle>
        <TitleGroup $end>
          <IconButton aria-label="搜索"><SearchIcon /></IconButton>
          <IconButton aria-label="协作"><PeopleIcon /></IconButton>
        </TitleGroup>
      </TitleBar>

      <TabRow>
        <Tabs>
          {TABS.map((name) => (
            <Tab key={name} $active={name === tab} onClick={() => setTab(name)}>
              {name}
            </Tab>
          ))}
        </Tabs>
        <TellMe>
          <BulbIcon />
          告诉我
        </TellMe>
        <TabActions>
          <ActionButton><ShareIcon />共享</ActionButton>
          <ActionButton><CommentIcon />批注</ActionButton>
        </TabActions>
      </TabRow>

      <Ribbon>
        <Group>
          <BigButton icon={<ShapesIcon />} label="形状" width={32} menu />
          <SmallColumn>
            <MenuIcon icon={<TextBoxIcon />} name="文本框" />
            <MenuIcon icon={<EditPointsIcon />} name="编辑形状" />
            <MenuIcon icon={<MergeIcon />} name="合并形状" dim />
          </SmallColumn>
        </Group>
        <Group>
          <Gallery>
            <StyleSwatch $color="#333">Abc</StyleSwatch>
            <StyleSwatch $color="#6d8fd0">Abc</StyleSwatch>
            <StyleSwatch $color="#e08a4f">Abc</StyleSwatch>
            <GalleryMore aria-label="更多形状样式"><ChevronRight /></GalleryMore>
          </Gallery>
          <BigButton icon={<Bucket size={22} />} label="形状填充" width={32} menu />
          <SmallColumn>
            <MenuIcon icon={<OutlineIcon />} name="形状轮廓" />
            <MenuIcon icon={<EffectsIcon />} name="形状效果" />
          </SmallColumn>
        </Group>
        <Group>
          <Gallery>
            <TextSwatch $color="#000">A</TextSwatch>
            <TextSwatch $color={BLUE}>A</TextSwatch>
            <TextSwatch $color="#f8c9a6" $outline="#ec7a33">A</TextSwatch>
            <GalleryMore aria-label="更多艺术字样式"><ChevronRight /></GalleryMore>
          </Gallery>
          <BigButton icon={<TextFillIcon />} label="文本填充" width={32} menu />
          <SmallColumn>
            <MenuIcon icon={<TextOutlineIcon />} name="文本轮廓" />
            <MenuIcon icon={<TextEffectIcon />} name="文本效果" />
          </SmallColumn>
        </Group>
        <Group>
          <BigButton icon={<AltTextIcon />} label={"Alt\n文本"} width={26} />
        </Group>
        <Group $gap={5}>
          <BigButton icon={<ForwardIcon />} label="前移一层" menu />
          <BigButton icon={<BackwardIcon />} label="后移一层" menu />
          <BigButton icon={<SelectionPaneIcon />} label={"选择\n窗格"} width={26} />
          <BigButton icon={<ReorderIcon />} label={"重新排\n序对象"} menu />
          <BigButton icon={<AlignIcon />} label="对齐" menu />
          <SmallColumn $width={26}>
            <MenuIcon icon={<GroupIcon />} name="组合" dim />
            <MenuIcon icon={<RotateIcon />} name="旋转" />
          </SmallColumn>
        </Group>
        <Group $gap={5} $wide>
          <SizeFields>
            <SizeField>
              <HeightIcon />
              <NumberBox $width={60}>
                <input aria-label="高度" defaultValue="0.99 厘米" />
                <Stepper />
              </NumberBox>
            </SizeField>
            <SizeField>
              <WidthIcon />
              <NumberBox $width={60}>
                <input aria-label="宽度" defaultValue="4.98 厘米" />
                <Stepper />
              </NumberBox>
            </SizeField>
          </SizeFields>
          <LockRatio>
            <Icon w={8} h={6} sw={1.6}><path d="M0 1h7v5" /></Icon>
            <input type="checkbox" aria-label="锁定纵横比" />
            <Icon w={8} h={6} sw={1.6}><path d="M0 5h7V0" /></Icon>
          </LockRatio>
        </Group>
        <Group $last>
          <BigButton icon={<FormatPaneIcon />} label={"格式\n窗格"} width={26} />
        </Group>
      </Ribbon>

      <Workspace>
        <Thumbnails>
          <span>1</span>
          <Thumb aria-label="幻灯片 1">
            <Icon w={8} h={6} sw={0.8}>
              <path d="M1 3h6M3 3l3-2M3 3l3 2M4 1v4" stroke={BLUE} />
            </Icon>
          </Thumb>
        </Thumbnails>
        <Editor>
          <RulerRow>
            <RulerCorner />
            <RulerTrack><HorizontalRuler /></RulerTrack>
          </RulerRow>
          <StageRow>
            <VRulerTrack><VerticalRuler /></VRulerTrack>
            <Stage>
              <Slide><SlideDrawing /></Slide>
            </Stage>
          </StageRow>
          <Notes>单击此处添加备注</Notes>
        </Editor>

        <Pane>
          <PaneHeader>
            <h2>设置形状格式</h2>
            <IconButton aria-label="关闭窗格"><CloseIcon /></IconButton>
          </PaneHeader>
          <Segments>
            <Segment $active>形状选项</Segment>
            <Segment>文本选项</Segment>
          </Segments>
          <KindTabs>
            <KindTab $active aria-label="填充与线条"><Bucket size={18} /></KindTab>
            <KindTab aria-label="效果"><PentagonIcon /></KindTab>
            <KindTab aria-label="大小与属性"><LayoutIcon /></KindTab>
          </KindTabs>
          <Section $open>
            <SectionHeader $open>
              <Icon w={8} h={6}><path d="M1.5 1.5 4 4.3 6.5 1.5" /></Icon>
              填充
            </SectionHeader>
            <RadioList aria-label="填充类型">
              {FILLS.map((name) => (
                <RadioRow key={name}>
                  <input type="radio" name="fill" checked={fill === name} onChange={() => setFill(name)} />
                  {name}
                </RadioRow>
              ))}
            </RadioList>
            <FieldRow>
              <span>颜色</span>
              <ColorButton aria-label="颜色">
                <Icon w={15} h={15}>
                  <rect x="0" y="12" width="15" height="3" fill={BLUE} stroke="none" />
                  <path d="M9.5 4C12 4.4 12.4 7 12 9.5L9.5 6.5Z" fill="#2f83c5" stroke="none" />
                  <path d="M6.5 3 3 6.8 6.8 10.4 10.5 6.6 7.8 4V1.5H6.5V5.5" fill="#cfe3f4" stroke="#3c3c3c" strokeWidth="0.8" />
                </Icon>
                <Caret />
              </ColorButton>
            </FieldRow>
            <FieldRow $last>
              <label htmlFor="alpha">透明度</label>
              <Range id="alpha" type="range" $width={88} defaultValue={0} />
              <NumberBox $width={50} $boxed>
                <input aria-label="透明度数值" defaultValue="0%" />
                <Icon w={5} h={15}>
                  <path d="M.7 5.2h3.6L2.5 2.4ZM.7 9.8h3.6L2.5 12.6Z" fill="#666" stroke="none" />
                </Icon>
              </NumberBox>
            </FieldRow>
          </Section>
          <Section>
            <SectionHeader>
              <Icon w={8} h={8}><path d="M2.5 1.2 5.3 4 2.5 6.8" /></Icon>
              线条
            </SectionHeader>
          </Section>
        </Pane>
      </Workspace>

      <StatusBar>
        <StatusText>幻灯片 1 / 1</StatusText>
        <StatusText>中文 (中国)</StatusText>
        <StatusRight>
          <StatusButton $width={48}><NotesIcon />备注</StatusButton>
          <StatusButton $width={49}><CommentSolidIcon />批注</StatusButton>
          <StatusButton $width={29} $active aria-label="普通视图"><NormalViewIcon /></StatusButton>
          <StatusButton $width={28} aria-label="幻灯片浏览"><SorterIcon /></StatusButton>
          <StatusButton $width={28} aria-label="阅读视图"><ReadingIcon /></StatusButton>
          <StatusButton $width={28} aria-label="幻灯片放映"><ShowIcon /></StatusButton>
          <StatusButton $width={18} aria-label="缩小">
            <Icon w={7} h={7} sw={1.6}><path d="M0 3.5h7" /></Icon>
          </StatusButton>
          <Range type="range" aria-label="缩放" $width={78} $dark defaultValue={47} />
          <StatusButton $width={16} aria-label="放大">
            <Icon w={7} h={7} sw={1.6}><path d="M0 3.5h7M3.5 0v7" /></Icon>
          </StatusButton>
          <StatusButton $width={40}>96%</StatusButton>
          <StatusButton $width={26} aria-label="适应窗口"><FitIcon /></StatusButton>
        </StatusRight>
      </StatusBar>
    </Window>
  );
}
